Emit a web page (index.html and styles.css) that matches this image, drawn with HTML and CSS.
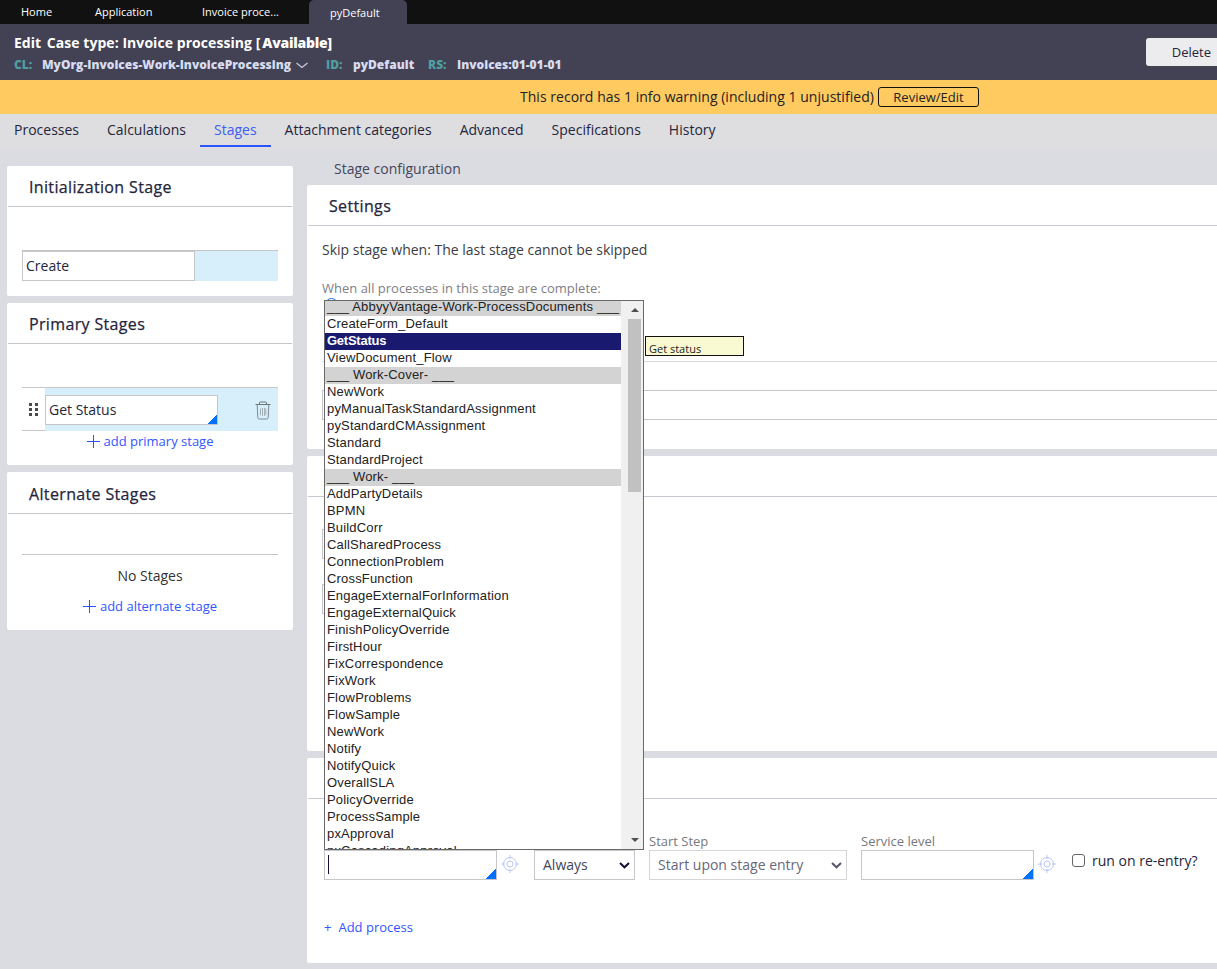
FILE: index.html
```html
<!DOCTYPE html>
<html lang="en">
<head>
  <meta charset="UTF-8">
  <meta name="viewport" content="width=device-width, initial-scale=1.0">
  <title>Invoice processing</title>
  <link rel="stylesheet" href="styles.css">
</head>
<body>
  <nav class="topbar">
    <a class="top-tab home">Home</a>
    <a class="top-tab app">Application</a>
    <a class="top-tab invoice">Invoice proce...</a>
    <a class="top-tab active">pyDefault</a>
  </nav>

  <header class="rule-header">
    <div class="rule-info">
      <h1><span>Edit</span> <span class="case-name">Case type: Invoice processing</span> <span class="status">[<b>Available]</b></span></h1>
      <div class="rule-keys">
        <span class="key cl">CL:</span><span class="val class-name">MyOrg-Invoices-Work-InvoiceProcessing</span>
        <svg class="chevron" width="12" height="7" viewBox="0 0 12 7"><path d="M0.5 1 L6 5.5 L11.5 1" fill="none" stroke="#c9cfe6" stroke-width="1.2"/></svg>
        <span class="key id">ID:</span><span class="val id-name">pyDefault</span>
        <span class="key rs">RS:</span><span class="val">Invoices:01-01-01</span>
      </div>
    </div>
    <button class="delete-btn">Delete</button>
  </header>

  <div class="warning">
    <span class="warning-text">This record has 1 info warning (including 1 unjustified)</span>
    <button class="review-btn">Review/Edit</button>
  </div>

  <nav class="tabs">
    <a class="tab">Processes</a>
    <a class="tab">Calculations</a>
    <a class="tab selected">Stages</a>
    <a class="tab">Attachment categories</a>
    <a class="tab">Advanced</a>
    <a class="tab">Specifications</a>
    <a class="tab">History</a>
  </nav>

  <main>
    <aside class="stages">
      <section class="card init">
        <h2>Initialization Stage</h2>
        <div class="stage-row init-row">
          <div class="field stage-name">Create</div>
        </div>
      </section>

      <section class="card primary">
        <h2>Primary Stages</h2>
        <div class="stage-row primary-row">
          <div class="handle">
            <svg width="10" height="14" viewBox="0 0 10 14" fill="#4a4a4a"><path d="M0 0h3v3H0zM6 0h3v3H6zM0 5h3v3H0zM6 5h3v3H6zM0 10h3v3H0zM6 10h3v3H6z"/></svg>
          </div>
          <div class="stage-cell">
            <div class="field stage-name combo">Get Status</div>
            <svg class="trash" width="16" height="19" viewBox="0 0 16 19" fill="none" stroke="#7f8a91">
              <path d="M0.5 3.5h15" stroke="#6a747a"/>
              <path d="M4.5 3V2q0-1 1-1h5q1 0 1 1v1" stroke="#6a747a"/>
              <path d="M2.2 4l0.6 12.5q0.1 1.5 1.5 1.5h7.4q1.4 0 1.5-1.5L13.8 4"/>
              <path d="M5.5 7.5v6.5M7.5 7v8M9.5 7v8M10.8 7.5v6.5" stroke="#a3b0b6"/>
            </svg>
          </div>
        </div>
        <a class="add-stage">
          <svg width="13" height="13" viewBox="0 0 13 13"><path d="M6.5 0v13M0 6.5h13" stroke="#2b52ff" fill="none"/></svg>
          <span>add primary stage</span>
        </a>
      </section>

      <section class="card alternate">
        <h2>Alternate Stages</h2>
        <div class="no-stages">No Stages</div>
        <a class="add-stage">
          <svg width="13" height="13" viewBox="0 0 13 13"><path d="M6.5 0v13M0 6.5h13" stroke="#2b52ff" fill="none"/></svg>
          <span>add alternate stage</span>
        </a>
      </section>
    </aside>

    <div class="config">
      <div class="config-title">Stage configuration</div>

      <section class="card settings">
        <h2>Settings</h2>
        <p class="skip">Skip stage when: The last stage cannot be skipped</p>
        <p class="hint">When all processes in this stage are complete:</p>
        <span class="radio"></span>
        <div class="divider"></div>
        <div class="field wide"></div>
      </section>

      <section class="card validation">
        <h2></h2>
        <div class="field narrow"></div>
        <div class="field narrow"></div>
      </section>

      <section class="card processes">
        <h2></h2>
        <div class="process-row">
          <div class="process-field">
            <div class="field combo process-name"><span class="caret"></span></div>
            <svg class="target" width="18" height="18" viewBox="0 0 18 18" fill="none" stroke="#b9c6fb"><circle cx="9" cy="9" r="6.5"/><circle cx="9" cy="9" r="3"/><path d="M9 0v4M9 14v4M0 9h4M14 9h4"/></svg>
            <!-- flow picker, opens upward from the process field -->
            <div class="picker">
              <ul class="picker-list">
                <li class="group">___ AbbyyVantage-Work-ProcessDocuments ___</li>
                <li>CreateForm_Default</li>
                <li class="current">GetStatus</li>
                <li>ViewDocument_Flow</li>
                <li class="group">___ Work-Cover- ___</li>
                <li>NewWork</li>
                <li>pyManualTaskStandardAssignment</li>
                <li>pyStandardCMAssignment</li>
                <li>Standard</li>
                <li>StandardProject</li>
                <li class="group">___ Work- ___</li>
                <li>AddPartyDetails</li>
                <li>BPMN</li>
                <li>BuildCorr</li>
                <li>CallSharedProcess</li>
                <li>ConnectionProblem</li>
                <li>CrossFunction</li>
                <li>EngageExternalForInformation</li>
                <li>EngageExternalQuick</li>
                <li>FinishPolicyOverride</li>
                <li>FirstHour</li>
                <li>FixCorrespondence</li>
                <li>FixWork</li>
                <li>FlowProblems</li>
                <li>FlowSample</li>
                <li>NewWork</li>
                <li>Notify</li>
                <li>NotifyQuick</li>
                <li>OverallSLA</li>
                <li>PolicyOverride</li>
                <li>ProcessSample</li>
                <li>pxApproval</li>
                <li>pxCascadingApproval</li>
              </ul>
              <div class="scrollbar">
                <i class="arrow up"></i>
                <i class="thumb"></i>
                <i class="arrow down"></i>
              </div>
            </div>
            <div class="tooltip">Get status</div>
          </div>
          <div class="field select always">Always
            <svg width="11" height="7" viewBox="0 0 11 7"><path d="M1 1l4.5 4.3L10 1" fill="none" stroke="#111133" stroke-width="2"/></svg>
          </div>
          <div class="labelled start">
            <label>Start Step</label>
            <div class="field select muted">Start upon stage entry
              <svg width="11" height="7" viewBox="0 0 11 7"><path d="M1 1l4.5 4.3L10 1" fill="none" stroke="#55566e" stroke-width="2"/></svg>
            </div>
          </div>
          <div class="labelled service">
            <label>Service level</label>
            <div class="field combo"></div>
          </div>
          <svg class="target" width="18" height="18" viewBox="0 0 18 18" fill="none" stroke="#b9c6fb"><circle cx="9" cy="9" r="6.5"/><circle cx="9" cy="9" r="3"/><path d="M9 0v4M9 14v4M0 9h4M14 9h4"/></svg>
          <div class="reentry"><span class="checkbox"></span><span>run on re-entry?</span></div>
        </div>
        <a class="add-process"><span>+</span><span>Add process</span></a>
      </section>
    </div>
  </main>
</body>
</html>
```
FILE: styles.css
```css
:root {
  --page-bg: #dbdce1;
  --header-bg: #434154;
  --warning-bg: #ffca5f;
  --tabs-bg: #dedee0;
  --text-color: #25253d;
  --link-color: #2b52ff;
  --border: #c6c6c8;
  --stage-bg: #d6effb;
}
* { box-sizing: border-box; margin: 0; padding: 0; }
body {
  width: 1217px;
  height: 969px;
  overflow: hidden;
  background-color: var(--page-bg);
  color: var(--text-color);
  font-family: "Open Sans", sans-serif;
  font-size: 14px;
  line-height: 20px;
}
svg { display: block; flex: none; }

/* top bar */
.topbar {
  display: flex;
  height: 24px;
  background-color: #111;
  color: #fff;
  font-size: 11px;
  line-height: 24px;
}
.top-tab { padding-left: 21px; white-space: nowrap; }
.home { width: 74px; }
.app { width: 107px; }
.invoice { width: 128px; }
.top-tab.active {
  width: 98px;
  padding-top: 1px;
  background-color: var(--header-bg);
  border-radius: 5px 5px 0 0;
}

/* rule header */
.rule-header {
  display: flex;
  justify-content: space-between;
  height: 56px;
  padding-left: 14px;
  background-color: var(--header-bg);
  color: #fff;
  overflow: hidden;
}
.rule-info { padding-top: 9px; }
h1 {
  font-size: 14px;
  font-weight: 700;
  line-height: 20px;
  white-space: nowrap;
}
.case-name { margin-left: 2px; letter-spacing: 0.06px; }
.status b { margin-left: 2px; letter-spacing: -0.25px; }
.rule-keys {
  display: flex;
  align-items: center;
  margin-top: 2px;
  height: 20px;
  font-size: 12px;
  font-weight: 800;
  white-space: nowrap;
}
.key { color: #4f9fa0; }
.val { color: #d7dcf0; }
.cl { width: 28px; }
.chevron { margin: 0 18px 0 5px; }
.id { width: 27px; }
.id-name { width: 75px; }
.rs { width: 29px; }
.delete-btn {
  width: 71px;
  height: 28px;
  margin-top: 14px;
  padding-right: 6px;
  border: 0;
  border-radius: 3px 0 0 3px;
  background-color: #ececee;
  color: var(--text-color);
  font: 13px "Open Sans", sans-serif;
  text-align: right;
}

.warning {
  display: flex;
  align-items: center;
  height: 34px;
  padding-left: 520px;
  background-color: var(--warning-bg);
  color: #222;
  white-space: nowrap;
}
.warning-text { width: 358px; letter-spacing: 0.03px; }
.review-btn {
  width: 101px;
  height: 20px;
  border: 1px solid #111;
  border-radius: 3px;
  background: none;
  color: #222;
  font: 13px/16px "Open Sans", sans-serif;
}

/* rule tabs */
.tabs {
  display: flex;
  height: 35px;
  background-color: var(--tabs-bg);
}
.tab {
  height: 33px;
  padding: 6px 14px 0;
  white-space: nowrap;
}
.tab.selected {
  color: #3f5cf5;
  border-bottom: 2px solid var(--link-color);
}

main { display: flex; }
.card {
  background-color: #fff;
  border-radius: 2px;
}
.card h2 {
  height: 41px;
  margin: 0 1px;
  padding: 11px 21px 0;
  border-bottom: 1px solid var(--border);
  font-size: 16px;
  font-weight: 500;
  line-height: 20px;
  letter-spacing: 0.35px;
  -webkit-text-stroke: 0.25px var(--text-color);
}
.field {
  height: 30px;
  border: 1px solid var(--border);
  background-color: #fff;
  line-height: 28px;
  white-space: nowrap;
}
/* blue corner that marks an autocomplete field */
.combo {
  background-image: linear-gradient(135deg, transparent 50%, #0070ff 50%);
  background-size: 10px 10px;
  background-position: right bottom;
  background-repeat: no-repeat;
}

/* left column */
.stages {
  display: flex;
  flex: none;
  flex-direction: column;
  gap: 7px;
  width: 286px;
  margin: 17px 14px 0 7px;
}
.init { height: 130px; }
.primary { height: 162px; }
.alternate { height: 158px; }
.alternate h2 { height: 42px; padding-top: 12px; }
.stage-row { margin: 0 15px; }
.stage-name { width: 173px; padding-left: 3px; }
.init-row {
  margin-top: 43px;
  height: 31px;
  border-top: 1px solid var(--border);
  background-color: var(--stage-bg);
}
.primary-row {
  display: flex;
  height: 44px;
  margin-top: 43px;
  border-top: 1px solid var(--border);
}
.handle {
  width: 23px;
  padding: 15px 0 0 7px;
  border-bottom: 1px solid var(--border);
}
.stage-cell {
  display: flex;
  flex: 1;
  justify-content: space-between;
  padding: 7px 7px 0 0;
  background-color: var(--stage-bg);
}
.trash { margin-top: 6px; }
.add-stage {
  display: flex;
  justify-content: center;
  align-items: center;
  gap: 4px;
  color: #3355ff;
  font-size: 13px;
}
.no-stages {
  margin: 40px 15px 10px;
  padding-top: 11px;
  border-top: 1px solid var(--border);
  color: #333;
  text-align: center;
}

/* right column */
.config { flex: none; width: 910px; }
.config-title {
  height: 36px;
  padding: 10px 0 0 27px;
  color: #45455c;
}
.config .card { border-radius: 2px 0 0 2px; }
.config h2 { margin-right: 0; border-color: #c8c8d0; }
.settings { height: 264px; }
.skip { margin: 14px 15px 0; color: #3c3c42; }
.hint {
  margin: 18px 15px 0;
  color: #808084;
  font-size: 13px;
}
.radio {
  display: block;
  width: 13px;
  height: 13px;
  margin-left: 18px;
  border: 1px solid #1a73e8;
  border-radius: 50%;
}
.divider {
  margin: 50px 0 28px 15px;
  border-top: 1px solid #dadada;
}
.wide { margin-left: 15px; border-right: 0; }
.validation { height: 295px; margin-top: 7px; }
.narrow { width: 200px; margin: 32px 0 0 15px; }
.narrow + .narrow { margin-top: 25px; }
.processes { height: 205px; margin-top: 7px; }

.process-row {
  display: flex;
  align-items: flex-end;
  height: 81px;
  padding-left: 17px;
}
.process-field {
  display: flex;
  position: relative;
  width: 210px;
}
.process-name { width: 173px; padding: 4px 0 0 3px; }
.caret {
  display: block;
  width: 1px;
  height: 19px;
  background-color: #111133;
}
.target { margin: 5px 0 0 4px; }
.select {
  display: flex;
  align-items: center;
  justify-content: space-between;
  padding: 0 4px 0 8px;
  color: #44445a;
}
.always { width: 101px; margin-right: 14px; }
.labelled label {
  display: block;
  height: 19px;
  color: #77777d;
  font-size: 13px;
  line-height: 20px;
}
.start { width: 198px; margin-right: 14px; }
.muted { color: #66677c; border-color: #d6d6d8; }
.service { width: 173px; }
.process-row > .target { margin: 0 0 7px 4px; }
.reentry {
  display: flex;
  align-items: center;
  gap: 7px;
  margin: 0 0 9px 16px;
  white-space: nowrap;
}
.checkbox {
  width: 13px;
  height: 13px;
  margin-bottom: 1px;
  border: 1px solid #666;
  border-radius: 3px;
}
.add-process {
  display: flex;
  gap: 7px;
  padding: 37px 0 0 17px;
  color: #3355ff;
  font-size: 13px;
}

/* flow picker */
.picker {
  position: absolute;
  left: 0;
  bottom: 30px;
  z-index: 2;
  display: flex;
  width: 320px;
  height: 550px;
  border: 1px solid #696969;
  background-color: #fff;
  overflow: hidden;
}
.picker-list {
  width: 296px;
  margin-top: -2px;
  color: #222;
  font: 13px/17px "Liberation Sans", Arial, sans-serif;
  letter-spacing: 0.17px;
  list-style: none;
}
.picker-list li {
  height: 17px;
  padding-left: 2px;
  line-height: 15px;
  white-space: nowrap;
}
.picker-list .group { background-color: #d3d3d3; }
.picker-list .current {
  background-color: #191970;
  color: #fff;
  font-weight: 700;
  letter-spacing: -0.25px;
}
.scrollbar {
  display: flex;
  flex-direction: column;
  align-items: center;
  width: 22px;
  padding: 7px 0 7px 5px;
  background-color: #f0f0f0;
}
.arrow { border: 4px solid transparent; }
.up { border-top: 0; border-bottom-color: #505050; }
.down { margin-top: auto; border-bottom: 0; border-top-color: #505050; }
.thumb {
  width: 13px;
  height: 173px;
  margin-top: 7px;
  background-color: #c1c1c1;
}
.tooltip {
  position: absolute;
  left: 321px;
  bottom: 524px;
  width: 99px;
  height: 20px;
  padding: 3px 0 0 3px;
  border: 1px solid #111;
  background-color: #fafad2;
  color: #222;
  font-size: 11px;
  line-height: 17px;
}
```
